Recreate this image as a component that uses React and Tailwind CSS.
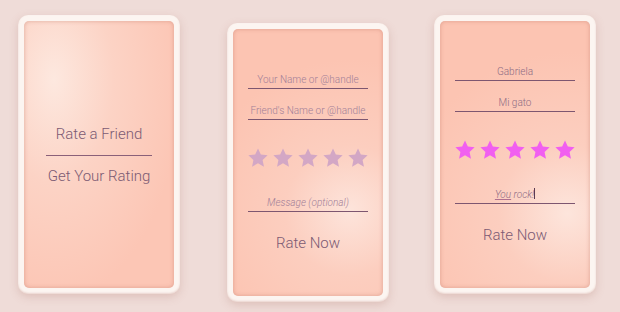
import React from "react";

const font = { fontFamily: "Roboto, 'Noto Sans', sans-serif" };

function Star({ color }) {
  return (
    <svg viewBox="0 0 24 24" className="w-[22px] h-[22px]">
      <polygon
        points="12,1.5 15.1,8.3 22.5,9.1 17,14.1 18.5,21.5 12,17.8 5.5,21.5 7,14.1 1.5,9.1 8.9,8.3"
        fill={color}
      />
    </svg>
  );
}

function Stars({ color }) {
  return (
    <div className="flex justify-between w-[122px] mt-[27px]">
      {[0, 1, 2, 3, 4].map((i) => (
        <Star key={i} color={color} />
      ))}
    </div>
  );
}

function Phone({ className = "", panel, children }) {
  return (
    <div
      className={`w-[162px] h-[279px] rounded-[10px] bg-[#fcf5f1] p-[6px] shadow-[0_3px_8px_rgba(170,110,100,0.25),inset_0_-1px_2px_rgba(200,150,140,0.35)] ${className}`}
    >
      <div
        className={`w-full h-full rounded-[5px] shadow-[inset_0_0_4px_rgba(190,110,95,0.45)] flex flex-col items-center ${panel}`}
      >
        {children}
      </div>
    </div>
  );
}

function Field({ children, className = "" }) {
  return (
    <div
      className={`w-[120px] border-b border-[#7d5670] text-center text-[10px] leading-[14px] font-light pb-[1px] ${className}`}
    >
      {children}
    </div>
  );
}

export default function App() {
  return (
    <div
      style={font}
      className="w-[620px] h-[312px] bg-[#efdcd8] flex items-start gap-[46px] pl-[18px] pt-[15px] overflow-hidden"
    >
      {/* start screen */}
      <Phone panel="justify-center bg-[radial-gradient(ellipse_at_20%_22%,#fde8df_0%,#fcd3c5_35%,#fcc6b5_75%)]">
        <div className="flex flex-col items-center text-[#7b5a73] text-[15px] leading-[20px] font-light">
          <div>Rate a Friend</div>
          <div className="w-[106px] h-px bg-[#8a6079] mt-[11px] mb-[10px]" />
          <div>Get Your Rating</div>
        </div>
      </Phone>

      {/* empty form */}
      <Phone
        className="mt-[8px] ml-[1px] -mr-[1px]"
        panel="pt-[44px] bg-[radial-gradient(circle_at_78%_68%,#fde4db_0%,#fccebf_30%,#fcc4b2_70%)]"
      >
        <Field className="text-[#a38098]">Your Name or @handle</Field>
        <Field className="text-[#a38098] mt-[15px]">Friend's Name or @handle</Field>
        <Stars color="#d3a7c5" />
        <Field className="text-[#a38098] italic mt-[27px]">Message (optional)</Field>
        <div className="mt-[21px] text-[15px] leading-[20px] font-light text-[#7b5a73]">Rate Now</div>
      </Phone>

      {/* filled form */}
      <Phone panel="pt-[44px] bg-[radial-gradient(circle_at_85%_72%,#fde5dc_0%,#fccebf_30%,#fcc4b2_70%)]">
        <Field className="text-[#8e6c84]">Gabriela</Field>
        <Field className="text-[#8e6c84] mt-[15px]">Mi gato</Field>
        <Stars color="#f15ff0" />
        <Field className="text-[#8e6c84] italic mt-[27px]">
          <span className="underline decoration-[#b0708f]">You</span> rock!
          <span className="inline-block w-px h-[11px] bg-[#5a3a50] align-[-1px]" />
        </Field>
        <div className="mt-[21px] text-[15px] leading-[20px] font-light text-[#7b5a73]">Rate Now</div>
      </Phone>
    </div>
  );
}
